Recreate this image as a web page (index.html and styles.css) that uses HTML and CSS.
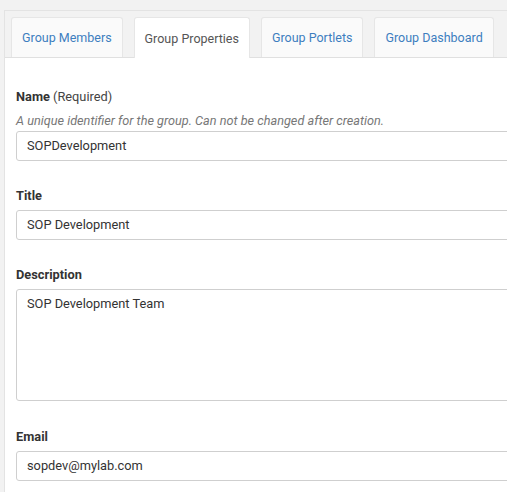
FILE: index.html
```html
<!DOCTYPE html>
<html>
<head>
<meta charset="utf-8">
<link rel="stylesheet" href="styles.css">
</head>
<body>
<div class="panel">
  <div class="tabs">
    <a class="tab">Group Members</a>
    <a class="tab active">Group Properties</a>
    <a class="tab">Group Portlets</a>
    <a class="tab">Group Dashboard</a>
  </div>
  <div class="content">
    <div class="field">
      <label class="label"><b>Name</b> (Required)</label>
      <div class="help">A unique identifier for the group. Can not be changed after creation.</div>
      <div class="input">SOPDevelopment</div>
    </div>
    <div class="field">
      <label class="label"><b>Title</b></label>
      <div class="input">SOP Development</div>
    </div>
    <div class="field field-tall">
      <label class="label"><b>Description</b></label>
      <div class="input textarea">SOP Development Team</div>
    </div>
    <div class="field">
      <label class="label"><b>Email</b></label>
      <div class="input">sopdev@mylab.com</div>
    </div>
  </div>
</div>
</body>
</html>
```
FILE: styles.css
```css
html, body {
  margin: 0;
  padding: 0;
  background: #f2f2f2;
  overflow: hidden;
  font-family: Roboto, "Liberation Sans", sans-serif;
}
body {
  padding: 10px 0 0 4px;
}
.panel {
  width: 620px;
  border: 1px solid #e3e3e3;
  background: #f2f2f2;
}
.tabs {
  display: flex;
  gap: 11px;
  padding: 6px 0 0 6px;
  border-bottom: 1px solid #e0e0e0;
}
.tab {
  display: flex;
  align-items: center;
  height: 39px;
  padding: 0 10px;
  background: #fafafa;
  border: 1px solid #e6e6e6;
  border-bottom: none;
  border-radius: 3px 3px 0 0;
  color: #3d7ebf;
  font-size: 12.5px;
  margin-bottom: -1px;
}
.tab.active {
  background: #fff;
  color: #555;
  height: 40px;
}
.content {
  background: #fff;
  padding: 31px 11px 20px 11px;
}
.field {
  margin-bottom: 27px;
}
.field-tall {
  margin-bottom: 28px;
}
.label {
  display: block;
  font-size: 12.8px;
  line-height: 16px;
  color: #444;
  margin-bottom: 6px;
}
.label b {
  font-weight: 700;
  color: #333;
}
.help {
  font-size: 12.7px;
  font-style: italic;
  color: #777;
  line-height: 16px;
  padding-top: 2px;
  margin-bottom: 2px;
}
.input {
  height: 28px;
  border: 1px solid #cfcfcf;
  border-radius: 3px;
  padding: 0 10px;
  font-size: 12.8px;
  color: #333;
  line-height: 28px;
}
.textarea {
  line-height: 16px;
  padding-top: 6px;
  height: 104px;
}
```
